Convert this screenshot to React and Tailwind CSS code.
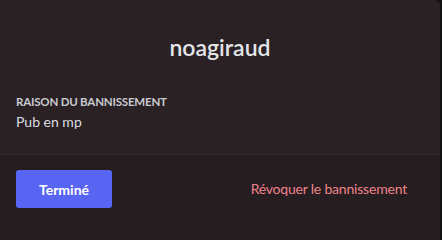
export default function App() {
  return (
    <div className="w-[442px] min-h-screen bg-[#111214] flex" style={{ fontFamily: 'Lato, "Noto Sans", sans-serif' }}>
      <div className="w-[440px] min-h-[222px] bg-[#2a2124] rounded-tr-[6px] flex flex-col">
        <div className="flex flex-col px-4">
          <div className="h-[94px] flex items-center justify-center pb-[1px]">
            <h1 className="text-[23px] font-semibold text-[#e3e5e8] leading-6">noagiraud</h1>
          </div>
          <div className="text-[11.5px] font-bold uppercase text-[#c9cbd0] leading-4 tracking-[-0.2px]">Raison du bannissement</div>
          <div className="text-[14px] text-[#dbdee1] leading-5 mt-[2px]">Pub en mp</div>
        </div>
        <div className="mt-[22px] h-px bg-[#312b33]" />
        <div className="flex-1 bg-[#251d20] flex items-start justify-between pl-4 pr-[33px] pt-[15px]">
          <button className="w-[96px] h-[38px] rounded-[3px] bg-[#5865f2] text-white text-[14px] font-bold">Terminé</button>
          <span className="text-[14px] text-[#f0838a] leading-[38px] tracking-[-0.2px]">Révoquer le bannissement</span>
        </div>
      </div>
    </div>
  );
}
